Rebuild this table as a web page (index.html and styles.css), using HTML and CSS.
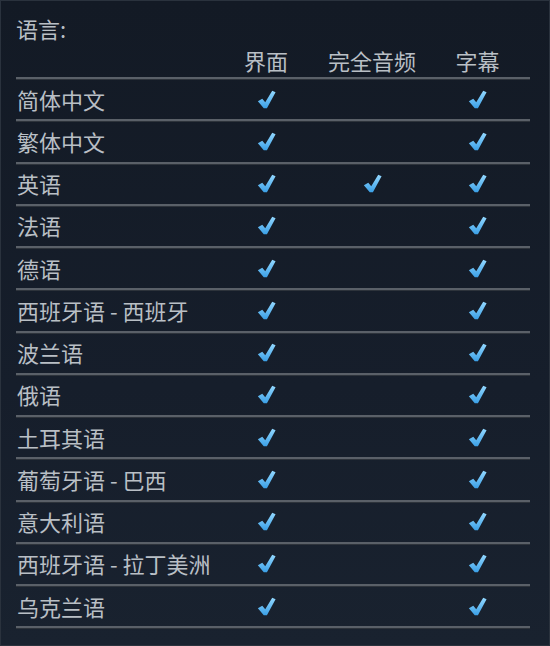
FILE: index.html
```html
<!DOCTYPE html>
<html lang="zh-CN">
<head>
<meta charset="utf-8">
<link rel="stylesheet" href="styles.css">
</head>
<body>
<svg width="0" height="0" class="defs">
  <defs>
    <linearGradient id="ck" x1="0" y1="0" x2="0" y2="1">
      <stop offset="0" stop-color="#93d8ff"/>
      <stop offset="1" stop-color="#3a9fe6"/>
    </linearGradient>
    <symbol id="check" viewBox="0 0 18 18">
      <path d="M0.8 10.6 L5 8.2 L7.8 11.6 L14.4 0.8 L17.6 2.2 L9.4 17.4 L6.4 17.4 Z" fill="url(#ck)"/>
    </symbol>
  </defs>
</svg>
<div class="panel">
  <div class="title">语言:</div>
  <div class="table">
    <div class="row head">
      <div class="lang"></div>
      <div class="col">界面</div>
      <div class="col">完全音频</div>
      <div class="col">字幕</div>
    </div>
    <div class="row"><div class="lang">简体中文</div><div class="col"><svg class="ic"><use href="#check"/></svg></div><div class="col"></div><div class="col"><svg class="ic"><use href="#check"/></svg></div></div>
    <div class="row"><div class="lang">繁体中文</div><div class="col"><svg class="ic"><use href="#check"/></svg></div><div class="col"></div><div class="col"><svg class="ic"><use href="#check"/></svg></div></div>
    <div class="row"><div class="lang">英语</div><div class="col"><svg class="ic"><use href="#check"/></svg></div><div class="col"><svg class="ic"><use href="#check"/></svg></div><div class="col"><svg class="ic"><use href="#check"/></svg></div></div>
    <div class="row"><div class="lang">法语</div><div class="col"><svg class="ic"><use href="#check"/></svg></div><div class="col"></div><div class="col"><svg class="ic"><use href="#check"/></svg></div></div>
    <div class="row"><div class="lang">德语</div><div class="col"><svg class="ic"><use href="#check"/></svg></div><div class="col"></div><div class="col"><svg class="ic"><use href="#check"/></svg></div></div>
    <div class="row"><div class="lang">西班牙语 - 西班牙</div><div class="col"><svg class="ic"><use href="#check"/></svg></div><div class="col"></div><div class="col"><svg class="ic"><use href="#check"/></svg></div></div>
    <div class="row"><div class="lang">波兰语</div><div class="col"><svg class="ic"><use href="#check"/></svg></div><div class="col"></div><div class="col"><svg class="ic"><use href="#check"/></svg></div></div>
    <div class="row"><div class="lang">俄语</div><div class="col"><svg class="ic"><use href="#check"/></svg></div><div class="col"></div><div class="col"><svg class="ic"><use href="#check"/></svg></div></div>
    <div class="row"><div class="lang">土耳其语</div><div class="col"><svg class="ic"><use href="#check"/></svg></div><div class="col"></div><div class="col"><svg class="ic"><use href="#check"/></svg></div></div>
    <div class="row"><div class="lang">葡萄牙语 - 巴西</div><div class="col"><svg class="ic"><use href="#check"/></svg></div><div class="col"></div><div class="col"><svg class="ic"><use href="#check"/></svg></div></div>
    <div class="row"><div class="lang">意大利语</div><div class="col"><svg class="ic"><use href="#check"/></svg></div><div class="col"></div><div class="col"><svg class="ic"><use href="#check"/></svg></div></div>
    <div class="row"><div class="lang">西班牙语 - 拉丁美洲</div><div class="col"><svg class="ic"><use href="#check"/></svg></div><div class="col"></div><div class="col"><svg class="ic"><use href="#check"/></svg></div></div>
    <div class="row"><div class="lang">乌克兰语</div><div class="col"><svg class="ic"><use href="#check"/></svg></div><div class="col"></div><div class="col"><svg class="ic"><use href="#check"/></svg></div></div>
  </div>
</div>
</body>
</html>
```
FILE: styles.css
```css
* { box-sizing: border-box; }
html, body {
  margin: 0;
  padding: 0;
  width: 550px;
  height: 646px;
  overflow: hidden;
  background: #141b26;
}
.defs { position: absolute; width: 0; height: 0; }
.panel {
  width: 550px;
  height: 646px;
  border: 1px solid #2a323d;
  background: linear-gradient(180deg, #131a25 0%, #161e2b 60%, #19222f 100%);
  padding: 12px 0 0 15px;
  font-family: "Noto Sans CJK SC", "Noto Sans", sans-serif;
  font-size: 22px;
  color: #b9bfc5;
}
.title {
  line-height: 30px;
  height: 30px;
}
.table {
  width: 514px;
}
.row {
  display: grid;
  grid-template-columns: 197px 106px 106px 105px;
  align-items: center;
  height: 42.25px;
  border-bottom: 2px solid #5a6068;
  box-shadow: 0 1px 0 #2d333b;
}
.row.head {
  height: 36px;
  align-items: end;
}
.row.head .col {
  line-height: 32px;
  padding-bottom: 1px;
}
.lang {
  padding-left: 1px;
  padding-bottom: 1px;
  line-height: 30px;
  white-space: nowrap;
}
.col {
  display: flex;
  justify-content: center;
  align-items: center;
}
.ic {
  width: 19px;
  height: 19px;
}
```
